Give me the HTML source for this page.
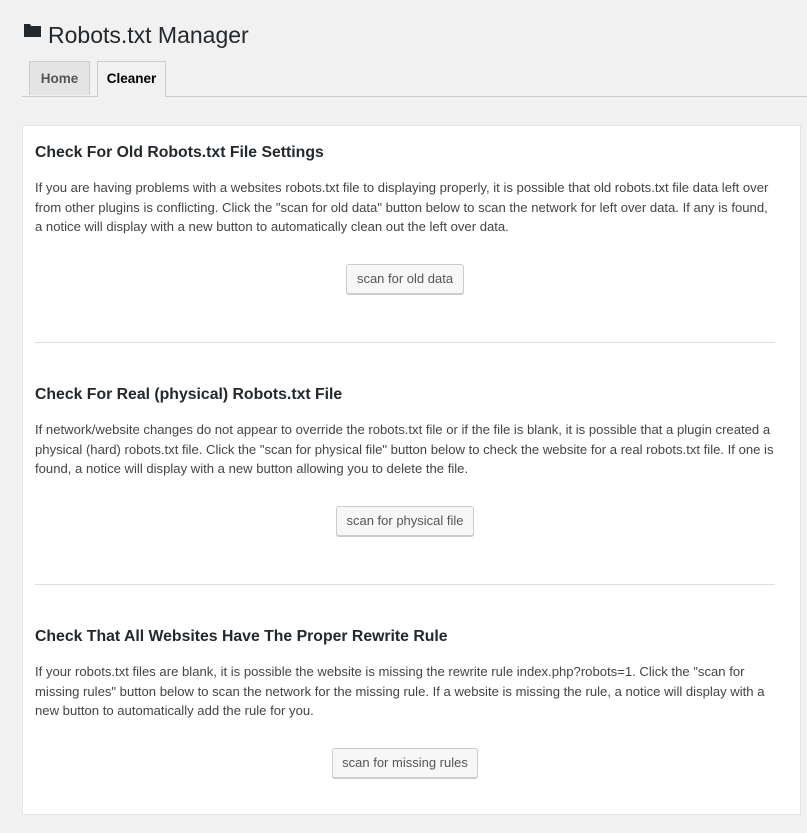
<!DOCTYPE html>
<html><head><style>
body{margin:0;width:807px;height:833px;background:#f1f1f1;font-family:"Liberation Sans",Arial,sans-serif;color:#23282d;position:relative;overflow:hidden}
.a{position:absolute}
h1{position:absolute;left:48px;top:20px;margin:0;font-size:23px;font-weight:400;color:#23282d;line-height:30px}
.tab{position:absolute;top:61px;height:34px;border:1px solid #ccc;border-bottom:none;font-size:13.5px;font-weight:bold;line-height:34px;text-align:center;box-sizing:border-box}
.panel{position:absolute;left:22px;top:125px;width:779px;height:690px;background:#fff;border:1px solid #e5e5e5;box-sizing:border-box}
h2{position:absolute;left:35px;margin:0;font-size:15.8px;font-weight:bold;color:#23282d;white-space:nowrap}
p{position:absolute;left:35px;margin:0;font-size:13.1px;line-height:19.5px;color:#444;white-space:nowrap}
.btn{position:absolute;height:30px;box-sizing:border-box;background:#f7f7f7;border:1px solid #ccc;border-radius:3px;box-shadow:0 1px 0 #ccc;font-size:13px;color:#555;line-height:28px;text-align:center;white-space:nowrap}
.hr{position:absolute;left:35px;width:740px;height:1px;background:#ddd}
</style></head><body>
<svg class="a" style="left:24px;top:24px" width="17" height="13" viewBox="0 0 17 13"><path d="M0 0h6l1 2h10v11H0z" fill="#23282d"/></svg>
<h1>Robots.txt Manager</h1>
<div class="a" style="left:22px;top:96px;width:785px;height:1px;background:#ccc"></div>
<div class="tab" style="left:29px;width:61px;background:#e4e4e4;color:#555">Home</div>
<div class="tab" style="left:97px;width:69px;height:36px;background:#f1f1f1;color:#000">Cleaner</div>
<div class="panel"></div>
<h2 style="top:144px">Check For Old Robots.txt File Settings</h2>
<p style="top:178px">If you are having problems with a websites robots.txt file to displaying properly, it is possible that old robots.txt file data left over<br>from other plugins is conflicting. Click the "scan for old data" button below to scan the network for left over data. If any is found,<br>a notice will display with a new button to automatically clean out the left over data.</p>
<div class="btn" style="left:346px;top:264px;width:118px">scan for old data</div>
<div class="hr" style="top:342px"></div>
<h2 style="top:386px">Check For Real (physical) Robots.txt File</h2>
<p style="top:420px">If network/website changes do not appear to override the robots.txt file or if the file is blank, it is possible that a plugin created a<br>physical (hard) robots.txt file. Click the "scan for physical file" button below to check the website for a real robots.txt file. If one is<br>found, a notice will display with a new button allowing you to delete the file.</p>
<div class="btn" style="left:336px;top:506px;width:138px">scan for physical file</div>
<div class="hr" style="top:584px"></div>
<h2 style="top:628px">Check That All Websites Have The Proper Rewrite Rule</h2>
<p style="top:662px">If your robots.txt files are blank, it is possible the website is missing the rewrite rule index.php?robots=1. Click the "scan for<br>missing rules" button below to scan the network for the missing rule. If a website is missing the rule, a notice will display with a<br>new button to automatically add the rule for you.</p>
<div class="btn" style="left:332px;top:748px;width:146px">scan for missing rules</div>
</body></html>
